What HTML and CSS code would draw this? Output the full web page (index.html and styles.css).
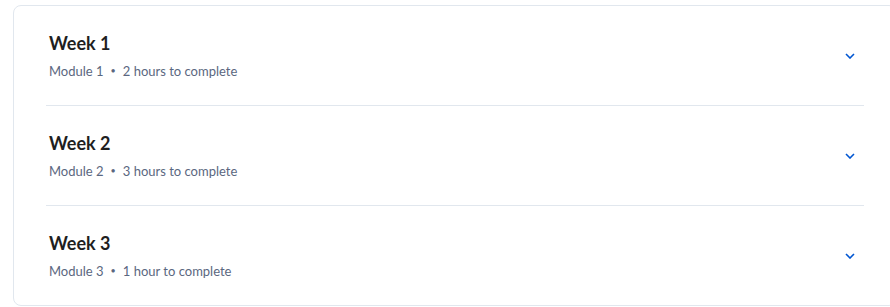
FILE: index.html
```html
<!DOCTYPE html>
<html>
<head>
<meta charset="utf-8">
<link rel="stylesheet" href="styles.css">
</head>
<body>
<div class="card">
  <div class="row">
    <div class="info">
      <div class="title">Week 1</div>
      <div class="meta"><span>Module 1</span><span class="dot">•</span><span>2 hours to complete</span></div>
    </div>
    <svg class="chev" width="10" height="6" viewBox="0 0 10 6"><path d="M1 1 L5 5 L9 1" fill="none" stroke="#0056d2" stroke-width="1.6"/></svg>
  </div>
  <div class="row">
    <div class="info">
      <div class="title">Week 2</div>
      <div class="meta"><span>Module 2</span><span class="dot">•</span><span>3 hours to complete</span></div>
    </div>
    <svg class="chev" width="10" height="6" viewBox="0 0 10 6"><path d="M1 1 L5 5 L9 1" fill="none" stroke="#0056d2" stroke-width="1.6"/></svg>
  </div>
  <div class="row last">
    <div class="info">
      <div class="title">Week 3</div>
      <div class="meta"><span>Module 3</span><span class="dot">•</span><span>1 hour to complete</span></div>
    </div>
    <svg class="chev" width="10" height="6" viewBox="0 0 10 6"><path d="M1 1 L5 5 L9 1" fill="none" stroke="#0056d2" stroke-width="1.6"/></svg>
  </div>
</div>
</body>
</html>
```
FILE: styles.css
```css
html, body {
  margin: 0;
  padding: 0;
  background: #fff;
  overflow: hidden;
}
body {
  font-family: Lato, "Noto Sans", sans-serif;
}
.card {
  box-sizing: border-box;
  width: 884px;
  margin: 5px 0 0 13px;
  border: 1px solid #e1e7ee;
  border-radius: 8px;
  padding: 0 32px;
}
.row {
  box-sizing: border-box;
  height: 100px;
  display: flex;
  align-items: center;
  justify-content: space-between;
  padding: 0 9px 0 3px;
  border-bottom: 1px solid #e1e7ee;
}
.row.last {
  border-bottom: none;
  height: 99px;
}
.info {
  display: flex;
  flex-direction: column;
}
.title {
  font-size: 18px;
  font-weight: 700;
  color: #1f1f1f;
  line-height: 24px;
}
.meta {
  margin-top: 7px;
  font-size: 13px;
  line-height: 18px;
  color: #5b6780;
  display: flex;
  align-items: center;
}
.dot {
  font-size: 9px;
  margin: 0 7px;
}
.chev {
  display: block;
}
```
